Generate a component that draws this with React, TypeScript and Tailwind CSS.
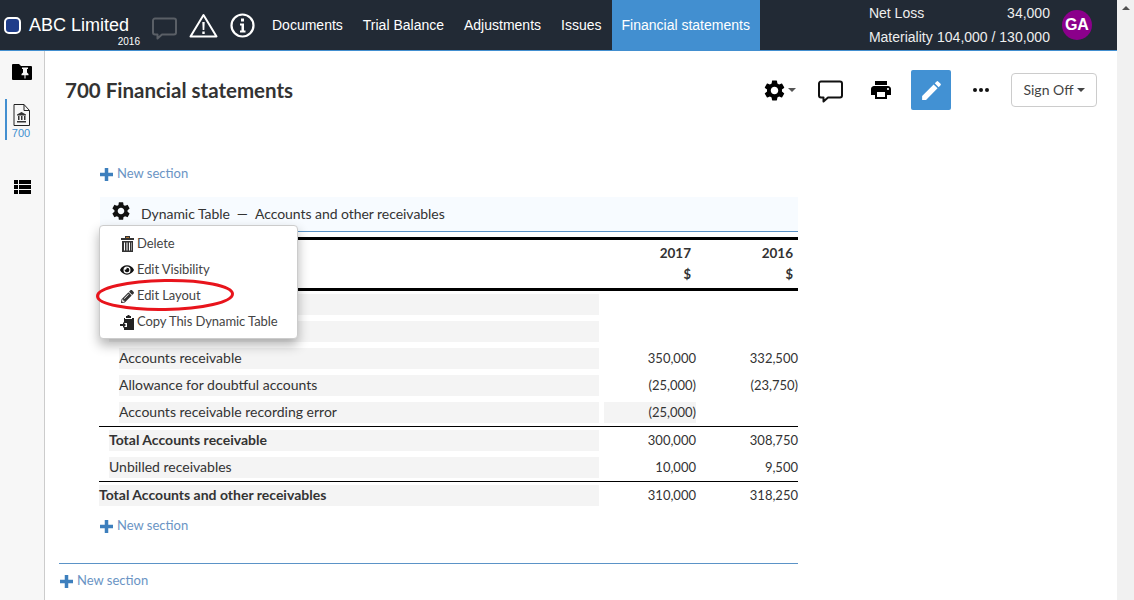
import { FaEye, FaPencilAlt } from "react-icons/fa";
import { MdEdit, MdPrint, MdSettings } from "react-icons/md";

type Row = {
  label?: string;
  indent: string;
  bold?: boolean;
  current?: string;
  prior?: string;
  highlight?: boolean;
  ruled?: boolean;
};

const rows: Row[] = [
  { indent: "pl-0" },
  { indent: "pl-[10px]" },
  { label: "Accounts receivable", indent: "pl-[20px]", current: "350,000", prior: "332,500" },
  { label: "Allowance for doubtful accounts", indent: "pl-[20px]", current: "(25,000)", prior: "(23,750)" },
  { label: "Accounts receivable recording error", indent: "pl-[20px]", current: "(25,000)", highlight: true },
  { label: "Total Accounts receivable", indent: "pl-[10px]", bold: true, current: "300,000", prior: "308,750", ruled: true },
  { label: "Unbilled receivables", indent: "pl-[10px]", current: "10,000", prior: "9,500" },
  { label: "Total Accounts and other receivables", indent: "pl-0", bold: true, current: "310,000", prior: "318,250", ruled: true },
];

const navItems = ["Documents", "Trial Balance", "Adjustments", "Issues"];

const NewSection = ({ className }: { className: string }) => (
  <div className={`flex items-center text-[13px] text-[#6a94c4] ${className}`}>
    <svg viewBox="0 0 13 13" className="w-[13px] h-[13px] mr-[4px]">
      <path fill="#3d7fbd" d="M4.750 0h3.500v4.750H13v3.500H8.250V13h-3.500V8.250H0v-3.500h4.750z" />
    </svg>
    <span>New section</span>
  </div>
);

const SpeechBubble = ({ className, stroke }: { className: string; stroke: string }) => (
  <svg viewBox="0 0 25 23" className={className} fill="none" stroke={stroke} strokeWidth="2" strokeLinejoin="round">
    <path d="M3 1.500h19a2 2 0 0 1 2 2v12a2 2 0 0 1-2 2H10l-4.500 4v-4H3a2 2 0 0 1-2-2v-12a2 2 0 0 1 2-2z" />
  </svg>
);

const Caret = ({ className }: { className: string }) => (
  <span className={`inline-block w-0 h-0 border-x-[4px] border-x-transparent border-t-[4px] ${className}`} />
);

const MenuItem = ({ icon, text }: { icon: React.ReactNode; text: string }) => (
  <div className="h-[26px] flex items-center">
    <span className="w-[37px] flex justify-end pr-[3px]">{icon}</span>
    <span>{text}</span>
  </div>
);

const DynamicMenu = () => (
  <div className="absolute left-0 top-[28px] w-[199px] h-[114px] pt-[5px] bg-white border border-[#ccc] rounded-[4px] shadow-[0_6px_12px_rgba(0,0,0,0.3)] text-[13px] tracking-[-0.08px] text-[#444] z-10">
    <MenuItem
      icon={
        <svg viewBox="0 0 13 16" className="w-[13px] h-[16px]">
          <path fill="#333" d="M4 0h5v2h4v2H0V2h4z" />
          <path fill="#b5742e" d="M5 1h3v1H5z" />
          <path fill="#333" fillRule="evenodd" d="M1 5h11v11H1zM3 6.500v8h1v-8zm2.500 0v8h1v-8zm2.500 0v8h1v-8zm2 0v8h.500v-8z" />
        </svg>
      }
      text="Delete"
    />
    <MenuItem icon={<FaEye className="w-[14px] h-[14px] text-[#111]" />} text="Edit Visibility" />
    <MenuItem icon={<FaPencilAlt className="w-[13px] h-[13px] text-[#333]" />} text="Edit Layout" />
    <MenuItem
      icon={
        <svg viewBox="0 0 14 15" className="w-[14px] h-[15px]">
          <path fill="#222" d="M6 1h1.500V0h2v1H11v2H6zM4 3h1v1h7V3h2v12H4v-3h3V8H4zM0 9h3V7l3 3-3 3v-2H0z" />
        </svg>
      }
      text="Copy This Dynamic Table"
    />
  </div>
);

const FinancialTable = () => (
  <div className="relative w-[699px] ml-[40px] mt-[15px] text-[14px] text-[#333]">
    <div className="h-[35px] ml-[1px] flex items-center bg-[#f7fbff] border-b border-[#5b93c7] pl-[10px] tracking-[-0.05px]">
      <MdSettings className="w-[22px] h-[22px] text-[#111] mr-[9px] -mt-[7px]" />
      <span className="pb-[1px]">Dynamic Table</span>
      <span className="pb-[1px] mx-[7px]">—</span>
      <span className="pb-[1px]">Accounts and other receivables</span>
    </div>
    <DynamicMenu />
    <div className="mt-[5px] border-y-[3px] border-black h-[54px] flex flex-col items-end font-bold">
      <div className="flex h-[26px] items-center text-[13.500px]">
        <span className="w-[92px] text-right">2017</span>
        <span className="w-[102px] text-right mr-[5px]">2016</span>
      </div>
      <div className="flex h-[18px] items-center text-[13px]">
        <span className="w-[92px] text-right">$</span>
        <span className="w-[102px] text-right mr-[5px]">$</span>
      </div>
    </div>
    <div className="pt-[3px]">
      {rows.map((row, i) => (
        <div key={i} className={row.ruled ? "border-t border-black mt-[3px] pt-[3px]" : "mt-[6px] first:mt-0"}>
          <div className="flex h-[21px] items-center">
            <div className={`w-[500px] h-full ${row.indent}`}>
              <div className={`h-full flex items-center pb-[2px] bg-[#f4f4f4] ${row.bold ? "font-bold" : ""}`}>{row.label}</div>
            </div>
            <div className={`w-[92px] ml-[5px] h-full flex items-center justify-end text-[13px] ${row.highlight ? "bg-[#f4f4f4]" : ""}`}>
              {row.current}
            </div>
            <div className="w-[102px] text-right text-[13px]">{row.prior}</div>
          </div>
        </div>
      ))}
    </div>
    <NewSection className="mt-[12px] ml-[1px] h-[16px]" />
    <svg viewBox="0 0 138 34" className="absolute left-[-3px] top-[81px] w-[138px] h-[34px] z-20" fill="none">
      <ellipse cx="69" cy="17" rx="67.500" ry="14.500" stroke="#e8141c" strokeWidth="3" transform="rotate(-1 69 17)" />
    </svg>
  </div>
);

const Header = () => (
  <header className="h-[51px] shrink-0 flex items-center bg-[#222a35] border-b border-[#428fd0] text-white text-[14px] font-['Liberation_Sans',sans-serif]">
    <span className="ml-[4px] w-[17px] h-[17px] rounded-[5px] border-2 border-white bg-[#1f3d8a]" />
    <div className="ml-[8px] w-[111px] flex flex-col self-start mt-[15px]">
      <span className="text-[18px] leading-[20px] whitespace-nowrap">ABC Limited</span>
      <span className="mt-[1px] text-[10px] leading-[12px] text-right">2016</span>
    </div>
    <SpeechBubble className="ml-[12px] w-[25px] h-[23px] mt-[6px]" stroke="#5a5f66" />
    <svg viewBox="0 0 29 25" className="ml-[12px] w-[29px] h-[25px] mt-[1px]" fill="none">
      <path d="M14.500 2L27.500 23.500H1.500z" stroke="white" strokeWidth="2" strokeLinejoin="round" />
      <path d="M13.300 9h2.400l-.4 8h-1.600zM13.300 18.500h2.400v2.500h-2.400z" fill="white" />
    </svg>
    <svg viewBox="0 0 25 25" className="ml-[12px] w-[25px] h-[25px]" fill="none">
      <circle cx="12.500" cy="12.500" r="11" stroke="white" strokeWidth="2.200" />
      <path d="M11 5.500h3v3h-3zM10 10.500h4v7h1.500v2h-5.500v-2h1.500v-5h-1.500z" fill="white" />
    </svg>
    <nav className="ml-[7px] h-full flex">
      {navItems.map((item) => (
        <span key={item} className="px-[10px] flex items-center whitespace-nowrap">
          {item}
        </span>
      ))}
      <span className="px-[10px] flex items-center whitespace-nowrap bg-[#428fd0]">Financial statements</span>
    </nav>
    <div className="ml-[109px] w-[181px] flex flex-col gap-[6px] text-[#eee]">
      <div className="flex justify-between leading-[18px]">
        <span>Net Loss</span>
        <span>34,000</span>
      </div>
      <div className="flex justify-between leading-[18px]">
        <span>Materiality</span>
        <span>104,000 / 130,000</span>
      </div>
    </div>
    <span className="ml-[12px] w-[30px] h-[30px] rounded-full bg-[#8b008b] flex items-center justify-center font-bold text-[16px]">
      GA
    </span>
  </header>
);

const Sidebar = () => (
  <aside className="w-[45px] shrink-0 bg-[#f7f7f7] border-r border-[#ccc] flex flex-col">
    <svg viewBox="0 0 20 16" className="ml-[12px] mt-[13px] w-[20px] h-[16px]">
      <path fill="#000" fillRule="evenodd" d="M1 0h6l2 2h10a1 1 0 0 1 1 1v12a1 1 0 0 1-1 1H1a1 1 0 0 1-1-1V1a1 1 0 0 1 1-1zm9 3.500v1.500h1v3.500l-1.500 1.500v1.200h3v3.300h1v-3.300h3V10L15 8.500V5h1V3.500z" />
    </svg>
    <div className="mt-[19px] ml-[5px] h-[41px] border-l-2 border-[#428fd0] flex flex-col items-center w-[30px]">
      <svg viewBox="0 0 17 22" className="mt-[5px] w-[17px] h-[22px]" fill="none">
        <path d="M1 .5h10l5.500 6v15H1z" stroke="#222" />
        <path d="M11 .5v6h5.500" stroke="#222" />
        <path fill="#333" d="M8.500 8l4.500 2.500v1H4v-1zM5 12h1.500v4H5zm3 0h1.500v4H8zm3 0h1.500v4H11zM4 17h9v1.500H4z" />
      </svg>
      <span className="mt-[1px] text-[11px] leading-[12px] text-[#428fd0] font-['Liberation_Sans',sans-serif]">700</span>
    </div>
    <svg viewBox="0 0 17 14" className="ml-[14px] mt-[40px] w-[17px] h-[14px]">
      <path fill="#000" d="M0 0h4v4H0zm5 0h12v4H5zM0 5h4v4H0zm5 0h12v4H5zM0 10h4v4H0zm5 0h12v4H5z" />
    </svg>
  </aside>
);

const Toolbar = () => (
  <div className="flex items-center">
    <MdSettings className="w-[25px] h-[25px] text-black -ml-[2px]" />
    <Caret className="ml-[1px] border-t-[#555]" />
    <SpeechBubble className="ml-[22px] w-[25px] h-[23px] mt-[2px]" stroke="#111" />
    <MdPrint className="ml-[26px] w-[24px] h-[24px] text-black" />
    <span className="ml-[18px] w-[40px] h-[40px] rounded-[2px] bg-[#4291d3] flex items-center justify-center">
      <MdEdit className="w-[25px] h-[25px] text-white" />
    </span>
    <svg viewBox="0 0 16 4" className="ml-[22px] w-[16px] h-[4px]">
      <circle cx="2" cy="2" r="2" fill="#111" />
      <circle cx="8" cy="2" r="2" fill="#111" />
      <circle cx="14" cy="2" r="2" fill="#111" />
    </svg>
    <button className="ml-[22px] w-[86px] h-[34px] pb-[2px] border border-[#ccc] rounded-[4px] text-[14px] text-[#444] flex items-center justify-center">
      Sign Off
      <Caret className="ml-[3px] mt-[2px] border-t-[#444]" />
    </button>
  </div>
);

export default function App() {
  return (
    <div className="h-[600px] flex overflow-hidden bg-white font-['Lato',sans-serif]">
      <div className="w-[1117px] flex flex-col">
        <Header />
        <div className="flex grow">
          <Sidebar />
          <main className="grow">
            <div className="h-[40px] mt-[19px] pl-[20px] pr-[20px] flex items-center justify-between">
              <h1 className="text-[20.500px] font-bold text-[#333]">700 Financial statements</h1>
              <Toolbar />
            </div>
            <NewSection className="mt-[56px] ml-[55px] h-[16px]" />
            <div className="ml-[14px]">
              <FinancialTable />
              <div className="w-[739px] mt-[29px] border-t border-[#5b93c7]" />
              <NewSection className="mt-[9px] ml-[1px] h-[16px]" />
            </div>
          </main>
        </div>
      </div>
      <div className="w-[17px] bg-[#f1f1f1] flex justify-center pt-[6px]">
        <Caret className="rotate-180 border-t-[#505050]" />
      </div>
    </div>
  );
}
